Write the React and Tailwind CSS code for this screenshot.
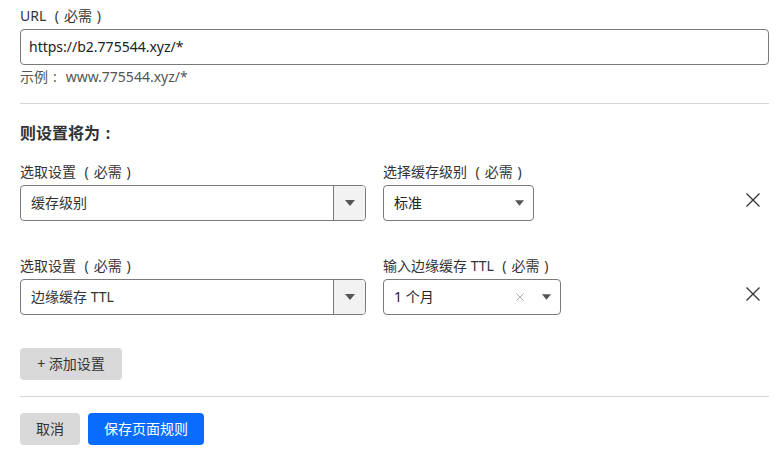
const font = { fontFamily: '"Noto Sans", "Noto Sans CJK SC", sans-serif' };

const Caret = ({ className = '' }) => (
  <svg width="10" height="6" viewBox="0 0 10 6" className={className}>
    <path d="M0 0 L10 0 L5 6 Z" fill="#555" />
  </svg>
);

const Cross = ({ size, color, width = 1.3 }) => (
  <svg width={size} height={size} viewBox={`0 0 ${size} ${size}`}>
    <path d={`M0.5 0.5 L${size - 0.5} ${size - 0.5} M${size - 0.5} 0.5 L0.5 ${size - 0.5}`} stroke={color} strokeWidth={width} fill="none" />
  </svg>
);

// full-width punctuation drawn centered in its cell
const P = ({ children }) => <span className="inline-block w-[14px] text-center">{children}</span>;

const Req = () => (
  <>
    <P>(</P>必需<P>)</P>
  </>
);

const RuleRow = ({ label, value, label2, value2, width2, clearable }) => (
  <div className="flex items-start">
    {/* Setting select */}
    <div className="w-[346px]">
      <div className="text-sm leading-5 text-[#333] mb-[3px]">{label}<Req /></div>
      <div className="flex h-[36px] border border-[#7a7a7a] rounded-[4px] overflow-hidden">
        <div className="flex-1 flex items-center pl-[10px] text-sm text-[#333]">{value}</div>
        <div className="w-[32px] flex items-center justify-center bg-[#f2f2f2] border-l border-[#7a7a7a]">
          <Caret />
        </div>
      </div>
    </div>

    {/* Value select */}
    <div className="ml-[17px]">
      <div className="text-sm leading-5 text-[#333] mb-[3px]">{label2}<Req /></div>
      <div className={`flex items-center h-[36px] border border-[#7a7a7a] rounded-[4px] pl-[10px] pr-[9px] ${width2}`}>
        <span className="flex-1 text-sm text-[#222]">{value2}</span>
        {clearable && (
          <span className="mr-[18px] flex">
            <Cross size={8} color="#aaa" width={1} />
          </span>
        )}
        <Caret className="w-[9px]" />
      </div>
    </div>

    {/* Remove */}
    <div className="flex-1 flex justify-end pr-[9px] pt-[31px]">
      <Cross size={14} color="#333" width={1.3} />
    </div>
  </div>
);

export default function App() {
  return (
    <div className="bg-white min-h-[457px] pl-[20px] pr-[8px] pt-[6px]" style={font}>
      {/* URL */}
      <div className="text-sm leading-5 text-[#333] mb-[3px]">URL <Req /></div>
      <div className="h-[36px] border border-[#7a7a7a] rounded-[4px] flex items-center pl-[8px] text-sm text-[#222]">
        https://b2.775544.xyz/*
      </div>
      <div className="text-sm leading-5 text-[#555] mt-[2px]">
        示例<P>:</P> www.775544.xyz/*
      </div>

      <div className="mt-[16px] h-px bg-[#d6d6d6]" />

      <h2 className="mt-[17px] text-base leading-6 font-bold text-[#333]">
        则设置将为<span className="inline-block w-[16px] text-center">:</span>
      </h2>

      <div className="mt-[17px] flex flex-col gap-[35px]">
        <RuleRow
          label="选取设置 "
          value="缓存级别"
          label2="选择缓存级别 "
          value2="标准"
          width2="w-[151px]"
        />
        <RuleRow
          label="选取设置 "
          value="边缘缓存 TTL"
          label2="输入边缘缓存 TTL "
          value2="1 个月"
          width2="w-[178px]"
          clearable
        />
      </div>

      <button className="mt-[33px] h-[32px] w-[102px] rounded-[4px] bg-[#d9d9d9] text-sm text-[#333]">
        + 添加设置
      </button>

      <div className="mt-[16px] h-px bg-[#d6d6d6]" />

      <div className="mt-[16px] flex gap-[8px]">
        <button className="h-[32px] w-[60px] rounded-[4px] bg-[#d9d9d9] text-sm text-[#333]">取消</button>
        <button className="h-[32px] w-[116px] rounded-[4px] bg-[#0a6cff] text-sm text-white">保存页面规则</button>
      </div>
    </div>
  );
}
